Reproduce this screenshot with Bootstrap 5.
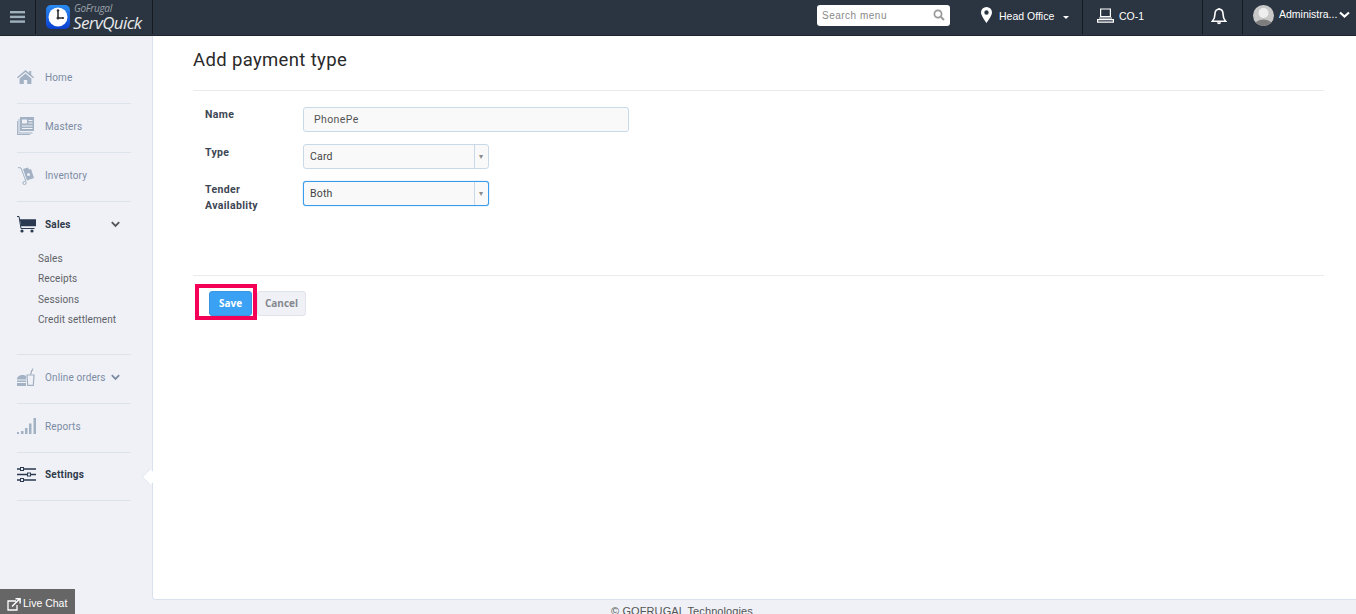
<!DOCTYPE html>
<html lang="en">
<head>
<meta charset="utf-8">
<title>Add payment type</title>
<link rel="stylesheet" href="https://cdn.jsdelivr.net/npm/bootstrap@5.3.0/dist/css/bootstrap.min.css">
<style>
html,body{height:614px;overflow:hidden}
body{font-family:Roboto,"Liberation Sans",sans-serif;background:#eff1f6;font-size:11px;color:#333}
.topstrip{height:36px;background:#2b3541;color:#fff;font-family:"Liberation Sans",sans-serif;border-bottom:1px solid #20262e}
.topcell{height:34px;border-right:1px solid #151a20}
.burger{width:36px}
.logocell{width:117px;padding-left:10px;gap:3px}
.brandtext{line-height:1;color:#e6e8ea;font-family:"Open Sans",sans-serif;font-style:italic}
.brandsmall{font-size:10px;color:#9aa2aa;margin-left:1px;height:10px;line-height:10px;letter-spacing:-.3px}
.brandbig{font-size:17px;height:19px;line-height:19px;letter-spacing:-.6px}
.searchfake{width:133px;height:21px;background:#fff;border-radius:3px;margin-right:31px;padding:0 5px;color:#8a8a8a;font-size:10px;letter-spacing:.5px}
.officecell{width:102px;font-size:10.5px;gap:7px}
.cocell{width:120px;padding-left:14px;gap:5px;font-size:10.5px}
.bellcell{width:40px;padding-right:8px}
.usercell{width:113px;border:0;padding-left:10px;gap:5px;font-size:10.5px}
.caretdown{width:0;height:0;border:3px solid transparent;border-top-color:#fff;margin-top:4px;margin-left:9px}
.sidepanel{width:152px;padding-top:19px;flex:none;position:relative}
.sideitem{height:49px;margin-left:17px;width:114px;border-bottom:1px solid #dde3ea;color:#7c8ba3;font-size:10px;letter-spacing:.12px;padding-bottom:4px;position:relative}
.sideitem svg{flex:none}
.sideico{width:18px;margin-right:10px;display:flex;justify-content:flex-start}
.sideitem.active{color:#2f3a4a;font-weight:700;letter-spacing:.2px}
.sideitem.expanded{border:0}
.sideitem.lastone{height:48px}
.subnav{height:106px;margin-top:-2px;border-bottom:1px solid #dde3ea;margin-left:17px;width:114px}
.subnav a{display:block;height:20.4px;line-height:20.4px;color:#5f6368;font-size:10px;padding-left:21px;text-decoration:none;letter-spacing:.1px}
.mainpane{flex:1;height:564px;background:#fff;border-left:1px solid #d9e2ec;border-bottom:1px solid #d9e2ec;border-bottom-left-radius:4px;position:relative;padding:0 32px 0 40px}
.pagetitle{font-family:Roboto,sans-serif;font-size:18.5px;font-weight:400;color:#2a2a2a;height:55px;line-height:48px;margin:0;letter-spacing:.35px;border-bottom:1px solid #e9ecef}
.formarea{height:185px;padding:16px 12px 0;border-bottom:1px solid #e9ecef}
.formline{margin-bottom:12px;min-height:25px}
.fieldlabel{width:98px;flex:none;font-size:10.5px;font-weight:700;color:#3c4654;line-height:15.5px;letter-spacing:.35px;padding-right:30px;margin:0}
.labeldrop{padding-top:1px}
.fieldname{width:326px;height:25px;background:#f9f9f9;border:1px solid #c9d9e8;border-radius:3px;padding:0 10px;font-size:10.5px;color:#555;letter-spacing:.4px;box-shadow:none}
.fieldpick{width:186px;height:25px;background:#f9f9f9;border:1px solid #c9d9e8;border-radius:3px;font-size:10.5px;color:#444;letter-spacing:.2px}
.fieldpick.focused{border-color:#3a9bea;box-shadow:0 0 1px #3a9bea}
.picktext{flex:1;padding-left:6px}
.pickarrow{width:14px;height:100%;border-left:1px solid #c9d9e8;color:#8a8a8a;font-size:8px}
.actionrow{padding:15px 0 0 16px;gap:5px}
.savebtn,.cancelbtn{height:25px;font-size:10px;font-weight:700;padding:0;border-radius:3px;font-family:"Open Sans",Roboto,sans-serif}
.savebtn{width:43px;background:#3ba1f5;border:1px solid #3a96e0;color:#fff}
.cancelbtn{width:49px;background:#eff1f6;border:1px solid #dfe3ea;color:#85888e}
.redmark{position:absolute;left:42px;top:248px;width:62px;height:36px;border:4px solid #f50057;pointer-events:none}
.pointer{position:absolute;left:142px;top:433px;width:16px;height:16px;background:#fff;border-left:1px solid #d9e2ec;border-bottom:1px solid #d9e2ec;transform:rotate(45deg) scale(.72);z-index:2}
.bottomtext{height:14px;text-align:center;padding:4px 0 0 8px;font-size:11px;color:#555;font-family:"Liberation Sans",sans-serif;letter-spacing:.1px;line-height:14px}
.chatbtn{position:absolute;left:0;bottom:0;width:75px;height:25px;background:#666;color:#fff;font-size:10.5px;font-family:"Liberation Sans",sans-serif;padding:5px 0 0 7px;gap:2px}
</style>
</head>
<body class="position-relative">
<header class="topstrip d-flex align-items-start">
  <div class="topcell burger d-flex align-items-center justify-content-center">
    <svg width="15" height="12" viewBox="0 0 15 12"><g fill="#9fb0bd"><rect y="0" width="15" height="2.4"/><rect y="4.7" width="15" height="2.4"/><rect y="9.4" width="15" height="2.4"/></g></svg>
  </div>
  <div class="topcell logocell d-flex align-items-center">
    <svg width="24" height="24" viewBox="0 0 24 24"><defs><linearGradient id="lg" x1="0" y1="0" x2="0" y2="1"><stop offset="0" stop-color="#2a8cf0"/><stop offset="1" stop-color="#0a3fd0"/></linearGradient></defs><rect width="24" height="24" rx="5" fill="url(#lg)"/><circle cx="12" cy="12" r="9.5" fill="#fff"/><path d="M12 5v8h5" fill="none" stroke="#333" stroke-width="1.6"/><circle cx="12" cy="5.5" r="1.3" fill="#333"/><circle cx="12" cy="13" r="1.5" fill="#333"/><circle cx="17" cy="13" r="1.1" fill="#333"/></svg>
    <div class="brandtext"><div class="brandsmall">GoFrugal</div><div class="brandbig">ServQuick</div></div>
  </div>
  <div class="flex-grow-1"></div>
  <div class="d-flex align-items-center" style="height:30px"><div class="searchfake d-flex align-items-center justify-content-between"><span>Search menu</span>
    <svg width="12" height="12" viewBox="0 0 12 12"><circle cx="5" cy="5" r="3.6" fill="none" stroke="#999" stroke-width="1.7"/><path d="M7.6 7.6L11 11" stroke="#999" stroke-width="2"/></svg></div></div>
  <div class="topcell officecell d-flex align-items-center">
    <svg width="11" height="16" viewBox="0 0 11 16" class="mb-1"><path fill-rule="evenodd" fill="#fff" d="M5.5 0A5.5 5.5 0 0 0 0 5.500C0 9 5.500 16 5.500 16S11 9 11 5.500A5.500 5.500 0 0 0 5.500 0zm0 3.300a2.200 2.200 0 1 1 0 4.400 2.200 2.200 0 0 1 0-4.400z"/></svg>
    <span class="d-flex align-items-center">Head Office<i class="caretdown"></i></span>
  </div>
  <div class="topcell cocell d-flex align-items-center">
    <svg width="17" height="15" viewBox="0 0 17 15" class="mb-1"><path fill="none" stroke="#fff" stroke-width="1.2" d="M3.600 1h9.800v7.500H3.600z"/><path fill="#fff" d="M2 9.500h13v1H2z"/><path fill="none" stroke="#fff" stroke-width="1.2" d="M.6 11.600h15.800v2.600H.6z"/></svg>
    <span>CO-1</span>
  </div>
  <div class="topcell bellcell d-flex align-items-center justify-content-center">
    <svg width="16" height="20" viewBox="0 0 16 20"><path fill="none" stroke="#fff" stroke-width="1.6" d="M8 2.200c-2.800 0-4 2-4 4.600 0 3.400-.8 5.400-2.600 7.400h13.200c-1.800-2-2.600-4-2.600-7.400 0-2.600-1.200-4.600-4-4.600z"/><path fill="#fff" d="M6.800 1.200h2.400v1.400H6.800zM6 15.200h4a2 2 0 0 1-4 0z"/></svg>
  </div>
  <div class="topcell usercell d-flex align-items-center">
    <svg width="21" height="21" viewBox="0 0 21 21" class="mb-1"><defs><clipPath id="uc"><circle cx="10.500" cy="10.500" r="10.500"/></clipPath></defs><g clip-path="url(#uc)"><rect width="21" height="21" fill="#c8c8c8"/><circle cx="10.500" cy="8" r="5" fill="#eee"/><ellipse cx="10.500" cy="21" rx="9.500" ry="6.500" fill="#7d7d7d"/></g></svg>
    <span class="mb-1">Administra...</span>
    <svg width="11" height="8" viewBox="0 0 11 8" class="mb-1" style="margin-left:-3px"><path d="M1 1.500L5.500 5.500 10 1.500" fill="none" stroke="#fff" stroke-width="2.2"/></svg>
  </div>
</header>
<div class="d-flex">
  <nav class="sidepanel">
    <div class="sideitem d-flex align-items-center"><span class="sideico"><svg width="17" height="14" viewBox="0 0 17 14"><path fill="#a3b1c4" d="M8.500 0L0 7.200l.9 1L8.500 2l7.600 6.200.9-1-2.800-2.400V1h-2v2.100zM2.600 8.600V14h4.200v-4h3.400v4h4.200V8.600L8.500 3.600z"/></svg></span>Home</div>
    <div class="sideitem d-flex align-items-center"><span class="sideico"><svg width="17" height="18" viewBox="0 0 17 18"><path fill="#a3b1c4" d="M3 0h14v14H3zM1.500 2H2.400v13.600H15.500V16.600H1.500zM0 4h.9v13.100H13V18H0z"/><path fill="#eff1f6" d="M5 2.500h5v4H5zM11.500 3h4v1h-4zM11.500 5.500h4v1h-4zM5 8.500h10.500v1H5zM5 11h10.500v1H5z"/></svg></span>Masters</div>
    <div class="sideitem d-flex align-items-center"><span class="sideico"><svg width="18" height="19" viewBox="0 0 18 19"><path fill="none" stroke="#a3b1c4" stroke-width="1" d="M1 1.500l3 .5 5 13.500"/><path fill="#a3b1c4" d="M6 3l5-1.500 1 2 2-.5 3 9-7 2.500z"/><circle cx="7.500" cy="17" r="1.600" fill="none" stroke="#a3b1c4"/><circle cx="11.500" cy="8.500" r="1.500" fill="#eff1f6"/></svg></span>Inventory</div>
    <div class="sideitem expanded active d-flex align-items-center"><span class="sideico"><svg width="19" height="17" viewBox="0 0 19 17"><path fill="#2b3a50" d="M2.800 3.300H19v7H4.200z"/><path fill="none" stroke="#2b3a50" d="M0 .5h2l2 12h13.500"/><circle cx="5" cy="15" r="1.600" fill="#2b3a50"/><circle cx="15" cy="15" r="1.600" fill="#2b3a50"/></svg></span><span>Sales</span>
      <svg class="ms-auto" style="margin-right:11px" width="9" height="7" viewBox="0 0 9 7"><path d="M.8 1.200L4.500 5 8.200 1.200" fill="none" stroke="#555" stroke-width="1.800"/></svg></div>
    <div class="subnav"><a href="#">Sales</a><a href="#">Receipts</a><a href="#">Sessions</a><a href="#">Credit settlement</a></div>
    <div class="sideitem d-flex align-items-center"><span class="sideico"><svg width="18" height="18" viewBox="0 0 18 18"><path fill="#a3b1c4" d="M0 11.500C0 8.500 2.500 7 5.500 7c1.500 0 2.500.3 3.500 1v3.500zM0 12.500h9V14H0zM0 15h9v3H0z"/><path fill="none" stroke="#a3b1c4" stroke-width="1.200" d="M10 7h7l-.7 10.400H10.700z"/><path stroke="#a3b1c4" stroke-width="1" d="M13.500 7l1-4 1.500-2.500"/></svg></span>Online orders
      <svg class="ms-auto" style="margin-right:11px" width="9" height="7" viewBox="0 0 9 7"><path d="M.8 1.200L4.500 5 8.200 1.200" fill="none" stroke="#7c8ba3" stroke-width="1.800"/></svg></div>
    <div class="sideitem d-flex align-items-center"><span class="sideico"><svg width="19" height="16" viewBox="0 0 19 16"><path fill="#a3b1c4" d="M0 14h2v2H0zM4 13h2.500v3H4zM8 10h2.500v6H8zM12 5.500h2.500V16H12zM16.500 0H19v16h-2.500z"/></svg></span>Reports</div>
    <div class="sideitem lastone active d-flex align-items-center"><span class="sideico"><svg width="19" height="15" viewBox="0 0 19 15"><g fill="none" stroke="#2b3a50"><path stroke-width="1.600" d="M0 2h3M7 2h12M0 7.500h10M14 7.500h5M0 13h3M7 13h12"/><rect x="3.500" y=".5" width="3" height="3" stroke-width="1"/><rect x="10.500" y="6" width="3" height="3" stroke-width="1"/><rect x="3.500" y="11.500" width="3" height="3" stroke-width="1"/></g></svg></span>Settings</div>
    <div class="pointer"></div>
  </nav>
  <main class="mainpane">
    <h1 class="pagetitle">Add payment type</h1>
    <div class="formarea">
      <div class="formline d-flex"><label class="fieldlabel">Name</label><input class="form-control fieldname" value="PhonePe"></div>
      <div class="formline d-flex"><label class="fieldlabel labeldrop">Type</label>
        <div class="fieldpick d-flex align-items-center"><span class="picktext">Card</span><span class="pickarrow d-flex align-items-center justify-content-center">▾</span></div></div>
      <div class="formline d-flex"><label class="fieldlabel labeldrop">Tender Availablity</label>
        <div class="fieldpick focused d-flex align-items-center"><span class="picktext">Both</span><span class="pickarrow d-flex align-items-center justify-content-center">▾</span></div></div>
    </div>
    <div class="actionrow d-flex">
      <button class="btn savebtn">Save</button>
      <button class="btn cancelbtn">Cancel</button>
    </div>
    <div class="redmark"></div>
  </main>
</div>
<footer class="bottomtext">© GOFRUGAL Technologies</footer>
<div class="chatbtn d-flex align-items-center">
  <svg width="14" height="13" viewBox="0 0 14 13"><path fill="none" stroke="#fff" stroke-width="1.300" d="M9 3H1v9h9V7"/><path fill="none" stroke="#fff" stroke-width="1.500" d="M5 8.500L12.500 1M8.500 .8h4.600v4.600"/></svg>
  <span>Live Chat</span>
</div>
</body>
</html>
